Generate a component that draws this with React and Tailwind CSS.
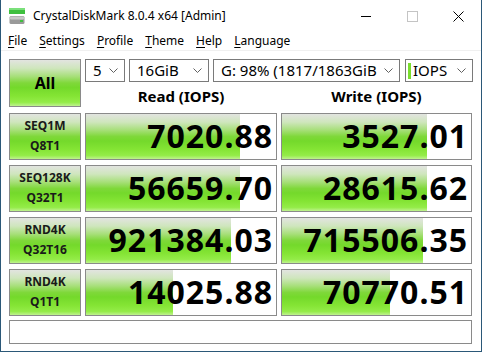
import React from "react";

const rows = [
  { l1: "SEQ1M", l2: "Q8T1", read: "7020.88", rw: 154, write: "3527.01", ww: 145 },
  { l1: "SEQ128K", l2: "Q32T1", read: "56659.70", rw: 154, write: "28615.62", ww: 145 },
  { l1: "RND4K", l2: "Q32T16", read: "921384.03", rw: 145, write: "715506.35", ww: 141 },
  { l1: "RND4K", l2: "Q1T1", read: "14025.88", rw: 87, write: "70770.51", ww: 108 },
];

const green =
  "bg-[linear-gradient(to_bottom,#e2e4e0_0%,#cfe6bd_18%,#a6df78_36%,#7fd83a_50%,#74d92b_60%,#84e434_78%,#94ec48_92%,#bff28f_100%)]";

function Chevron() {
  return (
    <svg width="9" height="6" viewBox="0 0 9 6" className="shrink-0">
      <polyline points="0.5,0.5 4.5,4.5 8.5,0.5" fill="none" stroke="#606060" strokeWidth="1" />
    </svg>
  );
}

function Combo({ className, children }) {
  return (
    <div
      className={`h-[23px] border border-[#7a7a7a] bg-white flex items-center pl-[7px] pr-[6px] gap-1 ${className}`}
    >
      <div className="flex-1 flex items-center overflow-hidden whitespace-nowrap text-[15px] text-[#000]">
        {children}
      </div>
      <Chevron />
    </div>
  );
}

function Value({ text, w }) {
  return (
    <div
      className={`h-[47px] border border-[#8a8a8a] bg-white bg-no-repeat ${green} flex items-center justify-end pr-[3px] text-[32px] tracking-[1px] font-bold text-black leading-none`}
      style={{ backgroundSize: `${w}px 100%` }}
    >
      {text}
    </div>
  );
}

function Label({ l1, l2 }) {
  return (
    <div
      className={`h-[47px] border border-[#8a8a8a] ${green} flex flex-col items-center justify-center text-[12px] font-bold text-[#1a1a1a] leading-[20px]`}
    >
      <span>{l1}</span>
      <span>{l2}</span>
    </div>
  );
}

function MenuItem({ first, rest }) {
  return (
    <span>
      <u className="underline-offset-2">{first}</u>
      {rest}
    </span>
  );
}

export default function App() {
  return (
    <div
      className="w-[482px] h-[352px] border border-t-0 border-[#2b5878] bg-white flex flex-col overflow-hidden"
      style={{ fontFamily: '"Noto Sans", "Open Sans", sans-serif' }}
    >
      {/* title bar */}
      <div className="h-[32px] shrink-0 flex items-center pl-[8px]">
        <svg width="16" height="16" viewBox="0 0 16 16" className="shrink-0">
          <rect x="0" y="0" width="16" height="6" fill="#3fbf3f" />
          <rect x="0" y="0" width="16" height="2" fill="#7be07b" />
          <rect x="0.5" y="8" width="15" height="8" rx="1.5" fill="#9a9a9a" />
          <rect x="1" y="8.5" width="14" height="3" rx="1" fill="#c8c8c8" />
          <rect x="11" y="12" width="3" height="2" fill="#3fbf3f" />
        </svg>
        <span className="ml-[8px] text-[12px] text-black">CrystalDiskMark 8.0.4 x64 [Admin]</span>
        <div className="ml-auto flex items-center h-full">
          <div className="w-[46px] h-full flex items-center justify-center">
            <div className="w-[10px] h-px bg-black" />
          </div>
          <div className="w-[46px] h-full flex items-center justify-center">
            <div className="w-[11px] h-[11px] border border-[#c4c4c4]" />
          </div>
          <div className="w-[46px] h-full flex items-center justify-center">
            <svg width="11" height="11" viewBox="0 0 11 11">
              <path d="M0.5 0.5 L10.5 10.5 M10.5 0.5 L0.5 10.5" stroke="#000" strokeWidth="1" />
            </svg>
          </div>
        </div>
      </div>

      {/* menu bar */}
      <div className="h-[19px] shrink-0 flex items-center gap-[12px] pl-[7px] text-[12px] text-black border-b border-[#f0f0f0]">
        <MenuItem first="F" rest="ile" />
        <MenuItem first="S" rest="ettings" />
        <MenuItem first="P" rest="rofile" />
        <MenuItem first="T" rest="heme" />
        <MenuItem first="H" rest="elp" />
        <MenuItem first="L" rest="anguage" />
      </div>

      {/* client */}
      <div className="pl-[8px] pt-[8px] flex flex-col gap-[5px]">
        <div className="flex gap-[4px]">
          <div
            className={`w-[72px] h-[48px] border border-[#8a8a8a] ${green} flex items-center justify-center text-[16px] font-bold text-black`}
          >
            All
          </div>
          <div className="w-[388px] flex flex-col">
            <div className="flex">
              <Combo className="w-[40px]">5</Combo>
              <Combo className="w-[80px] ml-[4px]">16GiB</Combo>
              <Combo className="w-[187px] ml-[4px]">G: 98% (1817/1863GiB</Combo>
              <Combo className="w-[68px] ml-[5px] !pl-[2px]">
                <span className="w-[3px] h-[16px] bg-[#7ade2e] mr-[2px] shrink-0" />
                IOPS
              </Combo>
            </div>
            <div className="flex-1 flex items-center pt-[3px] text-[15px] font-bold text-black">
              <div className="w-[192px] text-center">Read (IOPS)</div>
              <div className="w-[191px] ml-[4px] text-center">Write (IOPS)</div>
            </div>
          </div>
        </div>

        {rows.map((r, i) => (
          <div key={i} className="grid grid-cols-[72px_192px_191px] gap-[4px]">
            <Label l1={r.l1} l2={r.l2} />
            <Value text={r.read} w={r.rw} />
            <Value text={r.write} w={r.ww} />
          </div>
        ))}

        <div className="w-[463px] h-[24px] border border-[#8a8a8a] bg-white mt-[-1px]" />
      </div>
    </div>
  );
}
